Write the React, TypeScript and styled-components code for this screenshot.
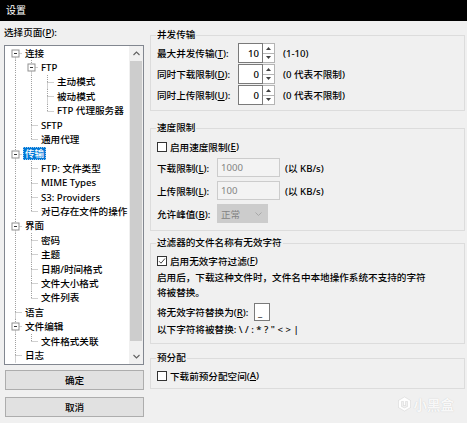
import React from 'react';
import styled, { createGlobalStyle } from 'styled-components';

const FONT = `"Noto Sans", "Noto Sans CJK SC", sans-serif`;

const Global = createGlobalStyle`
  html, body { margin: 0; padding: 0; background: #f0f0f0; }
  body { width: 467px; height: 423px; overflow: hidden; font-family: ${FONT}; font-size: 9.6px; font-weight: 500; color: #000; }
  * { box-sizing: border-box; }
`;

const Window = styled.div`
  width: 467px;
  height: 423px;
  background: #f0f0f0;
  position: relative;
  display: flex;
  flex-direction: column;
`;

const TitleBar = styled.div`
  height: 21px;
  flex-shrink: 0;
  background: #000;
  color: #fff;
  font-size: 10px;
  font-weight: 400;
  line-height: 21px;
  padding-left: 6px;
`;

const Body = styled.div`
  display: flex;
  gap: 6px;
  padding-left: 4px;
`;

const LeftCol = styled.div`
  width: 140px;
  display: flex;
  flex-direction: column;
  padding-top: 6px;
`;

const PaneLabel = styled.div`
  height: 12px;
  line-height: 12px;
  margin-bottom: 6px;
`;

const TreeBox = styled.div`
  height: 320px;
  border: 1px solid #828790;
  background: #fff;
  display: flex;
  overflow: hidden;
`;

const TreeList = styled.div`
  flex: 1;
  display: flex;
  flex-direction: column;
  overflow: hidden;
`;

const TreeRow = styled.div`
  height: 14.4px;
  flex-shrink: 0;
  display: flex;
  align-items: center;
  white-space: nowrap;
`;

const Guides = styled.svg`
  flex-shrink: 0;
  display: block;
`;

const NodeLabel = styled.span<{ $selected?: boolean }>`
  padding: 0 2px;
  line-height: 13px;
  height: 13px;
  ${(p) =>
    p.$selected
      ? `background: #0078d7; color: #fff; outline: 1px dotted #9cc8f0; outline-offset: -1px;`
      : ''}
`;

const ScrollBar = styled.div`
  width: 14px;
  flex-shrink: 0;
  background: #f0f0f0;
  display: flex;
  flex-direction: column;
`;

const ScrollArrow = styled.div`
  height: 15px;
  flex-shrink: 0;
  display: flex;
  align-items: center;
  justify-content: center;
`;

const ScrollTrack = styled.div`
  flex: 1;
  padding: 0 1px;
`;

const Thumb = styled.div`
  height: 280px;
  background: #cdcdcd;
`;

const ButtonStack = styled.div`
  display: flex;
  flex-direction: column;
  gap: 7px;
  margin-top: 5px;
`;

const DialogButton = styled.button`
  width: 139px;
  height: 20px;
  margin-left: 1px;
  padding: 0;
  background: #e1e1e1;
  border: 1px solid #adadad;
  font-family: ${FONT};
  font-size: 9.6px;
  font-weight: 500;
  color: #000;
`;

const RightCol = styled.div`
  width: 315px;
  display: flex;
  flex-direction: column;
`;

const Group = styled.fieldset<{ $mt: number; $pt: number; $pb: number }>`
  margin: ${(p) => p.$mt}px 0 0 0;
  padding: ${(p) => p.$pt}px 6px ${(p) => p.$pb}px 6px;
  border: 1px solid #dcdcdc;
  min-width: 0;
  display: flex;
  flex-direction: column;
`;

const Legend = styled.legend`
  padding: 0 1px;
  margin-left: -1px;
  height: 12px;
  line-height: 12px;
`;

const FieldRow = styled.div<{ $h: number; $mt?: number }>`
  display: flex;
  align-items: center;
  height: ${(p) => p.$h}px;
  margin-top: ${(p) => p.$mt ?? 0}px;
  white-space: nowrap;
`;

const FieldLabel = styled.span<{ $w: number }>`
  width: ${(p) => p.$w}px;
  flex-shrink: 0;
`;

const NumBox = styled.div`
  width: 25px;
  height: 20px;
  border: 1px solid #7a7a7a;
  background: #fff;
  display: flex;
  align-items: center;
  justify-content: flex-end;
  padding-right: 3px;
`;

const Spinner = styled.div`
  width: 12px;
  height: 20px;
  border: 1px solid #b4b4b4;
  border-left: none;
  background: #fff;
  display: flex;
  flex-direction: column;
`;

const SpinHalf = styled.div<{ $top?: boolean }>`
  flex: 1;
  display: flex;
  align-items: center;
  justify-content: center;
  ${(p) => (p.$top ? 'border-bottom: 1px solid #b4b4b4;' : '')}
`;

const Hint = styled.span<{ $ml: number }>`
  margin-left: ${(p) => p.$ml}px;
`;

const TextBox = styled.div<{ $w: number; $disabled?: boolean }>`
  width: ${(p) => p.$w}px;
  height: 100%;
  border: 1px solid ${(p) => (p.$disabled ? '#cccccc' : '#7a7a7a')};
  background: ${(p) => (p.$disabled ? '#f3f3f3' : '#fff')};
  color: ${(p) => (p.$disabled ? '#838383' : '#000')};
  font-weight: ${(p) => (p.$disabled ? 400 : 500)};
  display: flex;
  align-items: center;
  padding-left: 3px;
`;

const SelectBox = styled.div`
  width: 51px;
  height: 100%;
  background: #cccccc;
  border: 1px solid #cccccc;
  color: #838383;
  font-weight: 400;
  display: flex;
  align-items: center;
  justify-content: space-between;
  padding: 0 5px 0 3px;
`;

const CheckRow = styled.label<{ $mt?: number }>`
  display: flex;
  align-items: center;
  height: 15px;
  margin-top: ${(p) => p.$mt ?? 0}px;
  white-space: nowrap;
`;

const CheckBox = styled.span`
  width: 10px;
  height: 10px;
  flex-shrink: 0;
  border: 1px solid #333;
  background: #fff;
  margin-right: 3px;
  display: flex;
  align-items: center;
  justify-content: center;
`;

const Para = styled.div<{ $mt?: number }>`
  line-height: 15px;
  margin-top: ${(p) => p.$mt ?? 0}px;
  white-space: nowrap;
`;

const Watermark = styled.div`
  position: absolute;
  right: 13px;
  bottom: 9px;
  display: flex;
  align-items: center;
  gap: 2px;
  color: rgba(255, 255, 255, 0.9);
  font-size: 13.5px;
  font-family: "Noto Sans CJK SC", sans-serif;
  font-weight: 700;
  text-shadow: 0 0 1px rgba(0, 0, 0, 0.18);
  pointer-events: none;
`;

type Node = { label: string; level: number; expander?: boolean; selected?: boolean };

const nodes: Node[] = [
  { label: '连接', level: 0, expander: true },
  { label: 'FTP', level: 1, expander: true },
  { label: '主动模式', level: 2 },
  { label: '被动模式', level: 2 },
  { label: 'FTP 代理服务器', level: 2 },
  { label: 'SFTP', level: 1 },
  { label: '通用代理', level: 1 },
  { label: '传输', level: 0, expander: true, selected: true },
  { label: 'FTP: 文件类型', level: 1 },
  { label: 'MIME Types', level: 1 },
  { label: 'S3: Providers', level: 1 },
  { label: '对已存在文件的操作', level: 1 },
  { label: '界面', level: 0, expander: true },
  { label: '密码', level: 1 },
  { label: '主题', level: 1 },
  { label: '日期/时间格式', level: 1 },
  { label: '文件大小格式', level: 1 },
  { label: '文件列表', level: 1 },
  { label: '语言', level: 0 },
  { label: '文件编辑', level: 0, expander: true },
  { label: '文件格式关联', level: 1 },
  { label: '日志', level: 0 },
];

function hasNextSibling(i: number): boolean {
  const L = nodes[i].level;
  for (let j = i + 1; j < nodes.length; j++) {
    if (nodes[j].level < L) return false;
    if (nodes[j].level === L) return true;
  }
  return L === 0;
}

function ancestorIndex(i: number, level: number): number {
  for (let j = i - 1; j >= 0; j--) if (nodes[j].level === level) return j;
  return -1;
}

const H = 14.4;
const MID = 7.5;
const LINE = '#a0a0a0';

const TreeGuides: React.FC<{ i: number }> = ({ i }) => {
  const n = nodes[i];
  const w = 18 + 16 * n.level;
  const lx = (lvl: number) => 10.5 + 16 * lvl;
  const parts: React.ReactNode[] = [];
  for (let a = 0; a < n.level; a++) {
    const anc = ancestorIndex(i, a);
    if (anc >= 0 && hasNextSibling(anc)) {
      parts.push(
        <line key={'a' + a} x1={lx(a)} y1={0} x2={lx(a)} y2={H} stroke={LINE} strokeDasharray="1 1" />
      );
    }
  }
  const x = lx(n.level);
  if (i !== 0) {
    parts.push(<line key="up" x1={x} y1={0} x2={x} y2={MID} stroke={LINE} strokeDasharray="1 1" />);
  }
  if (hasNextSibling(i)) {
    parts.push(<line key="down" x1={x} y1={MID} x2={x} y2={H} stroke={LINE} strokeDasharray="1 1" />);
  }
  parts.push(<line key="h" x1={x} y1={MID} x2={w - 1} y2={MID} stroke={LINE} strokeDasharray="1 1" />);
  if (n.expander) {
    parts.push(
      <g key="box">
        <rect x={x - 3.5} y={MID - 3.5} width={7} height={7} fill="#fff" stroke="#919191" />
        <line x1={x - 1.5} y1={MID} x2={x + 1.5} y2={MID} stroke="#333" />
      </g>
    );
  }
  return (
    <Guides width={w} height={H} viewBox={`0 0 ${w} ${H}`}>
      {parts}
    </Guides>
  );
};

const Chevron: React.FC<{ up?: boolean }> = ({ up }) => (
  <svg width="7" height="5" viewBox="0 0 7 5">
    <path d={up ? 'M0.5 4 L3.5 1 L6.5 4' : 'M0.5 1 L3.5 4 L6.5 1'} fill="none" stroke="#606060" strokeWidth="1.1" />
  </svg>
);

const Tri: React.FC<{ up?: boolean }> = ({ up }) => (
  <svg width="5" height="3" viewBox="0 0 5 3">
    <path d={up ? 'M0 3 L2.5 0 L5 3 Z' : 'M0 0 L2.5 3 L5 0 Z'} fill="#404040" />
  </svg>
);

const Tick: React.FC = () => (
  <svg width="8" height="8" viewBox="0 0 8 8">
    <path d="M1 4.2 L3 6.2 L7 1.5" fill="none" stroke="#444" strokeWidth="1" />
  </svg>
);

const NumField: React.FC<{ label: React.ReactNode; value: string; hint: string; mt?: number }> = ({
  label,
  value,
  hint,
  mt,
}) => (
  <FieldRow $h={20} $mt={mt}>
    <FieldLabel $w={81}>{label}</FieldLabel>
    <NumBox>{value}</NumBox>
    <Spinner>
      <SpinHalf $top>
        <Tri up />
      </SpinHalf>
      <SpinHalf>
        <Tri />
      </SpinHalf>
    </Spinner>
    <Hint $ml={8}>{hint}</Hint>
  </FieldRow>
);

export default function App() {
  return (
    <Window>
      <Global />
      <TitleBar>设置</TitleBar>
      <Body>
        <LeftCol>
          <PaneLabel>
            选择页面(<u>P</u>):
          </PaneLabel>
          <TreeBox>
            <TreeList>
              {nodes.map((n, i) => (
                <TreeRow key={i}>
                  <TreeGuides i={i} />
                  <NodeLabel $selected={n.selected}>{n.label}</NodeLabel>
                </TreeRow>
              ))}
            </TreeList>
            <ScrollBar>
              <ScrollArrow>
                <Chevron up />
              </ScrollArrow>
              <ScrollTrack>
                <Thumb />
              </ScrollTrack>
              <ScrollArrow>
                <Chevron />
              </ScrollArrow>
            </ScrollBar>
          </TreeBox>
          <ButtonStack>
            <DialogButton>确定</DialogButton>
            <DialogButton>取消</DialogButton>
          </ButtonStack>
        </LeftCol>

        <RightCol>
          <Group $mt={8} $pt={2} $pb={5}>
            <Legend>并发传输</Legend>
            <NumField label={<>最大并发传输(<u>T</u>):</>} value="10" hint="(1-10)" />
            <NumField label={<>同时下载限制(<u>D</u>):</>} value="0" hint="(0 代表不限制)" mt={1} />
            <NumField label={<>同时上传限制(<u>U</u>):</>} value="0" hint="(0 代表不限制)" mt={1} />
          </Group>

          <Group $mt={11} $pt={5} $pb={7}>
            <Legend>速度限制</Legend>
            <CheckRow>
              <CheckBox />
              启用速度限制(<u>E</u>)
            </CheckRow>
            <FieldRow $h={19} $mt={4}>
              <FieldLabel $w={60}>
                下载限制(<u>L</u>):
              </FieldLabel>
              <TextBox $w={63} $disabled>
                1000
              </TextBox>
              <Hint $ml={5}>(以 KB/s)</Hint>
            </FieldRow>
            <FieldRow $h={19} $mt={4}>
              <FieldLabel $w={60}>
                上传限制(<u>L</u>):
              </FieldLabel>
              <TextBox $w={63} $disabled>
                100
              </TextBox>
              <Hint $ml={5}>(以 KB/s)</Hint>
            </FieldRow>
            <FieldRow $h={19} $mt={4}>
              <FieldLabel $w={60}>
                允许峰值(<u>B</u>):
              </FieldLabel>
              <SelectBox>
                正常
                <svg width="7" height="4" viewBox="0 0 7 4">
                  <path d="M0.5 0.5 L3.5 3.5 L6.5 0.5" fill="none" stroke="#a8a8a8" strokeWidth="1" />
                </svg>
              </SelectBox>
            </FieldRow>
          </Group>

          <Group $mt={6} $pt={4} $pb={6}>
            <Legend>过滤器的文件名称有无效字符</Legend>
            <CheckRow>
              <CheckBox>
                <Tick />
              </CheckBox>
              启用无效字符过滤(<u>F</u>)
            </CheckRow>
            <Para $mt={2}>
              启用后，下载这种文件时，文件名中本地操作系统不支持的字符
              <br />
              将被替换。
            </Para>
            <FieldRow $h={18} $mt={3}>
              <FieldLabel $w={97}>
                将无效字符替换为(<u>R</u>):
              </FieldLabel>
              <TextBox $w={16}>_</TextBox>
            </FieldRow>
            <Para $mt={1}>以下字符将被替换: \ / : * ? " &lt; &gt; |</Para>
          </Group>

          <Group $mt={8} $pt={4} $pb={5}>
            <Legend>预分配</Legend>
            <CheckRow>
              <CheckBox />
              下载前预分配空间(<u>A</u>)
            </CheckRow>
          </Group>
        </RightCol>
      </Body>
      <Watermark>
        <svg width="15" height="16" viewBox="0 0 15 16">
          <path
            d="M7.5 1 L13.5 4.5 L13.5 11.5 L7.5 15 L1.5 11.5 L1.5 4.5 Z M4.5 5.5 L4.5 10.5 L7.5 12 L10.5 10.5 L10.5 5.5 L8.5 5.5 L8.5 9.5 L6.5 9.5 L6.5 5.5 Z"
            fill="rgba(255,255,255,0.9)"
            fillRule="evenodd"
            stroke="rgba(0,0,0,0.12)"
            strokeWidth="0.6"
          />
        </svg>
        小黑盒
      </Watermark>
    </Window>
  );
}
